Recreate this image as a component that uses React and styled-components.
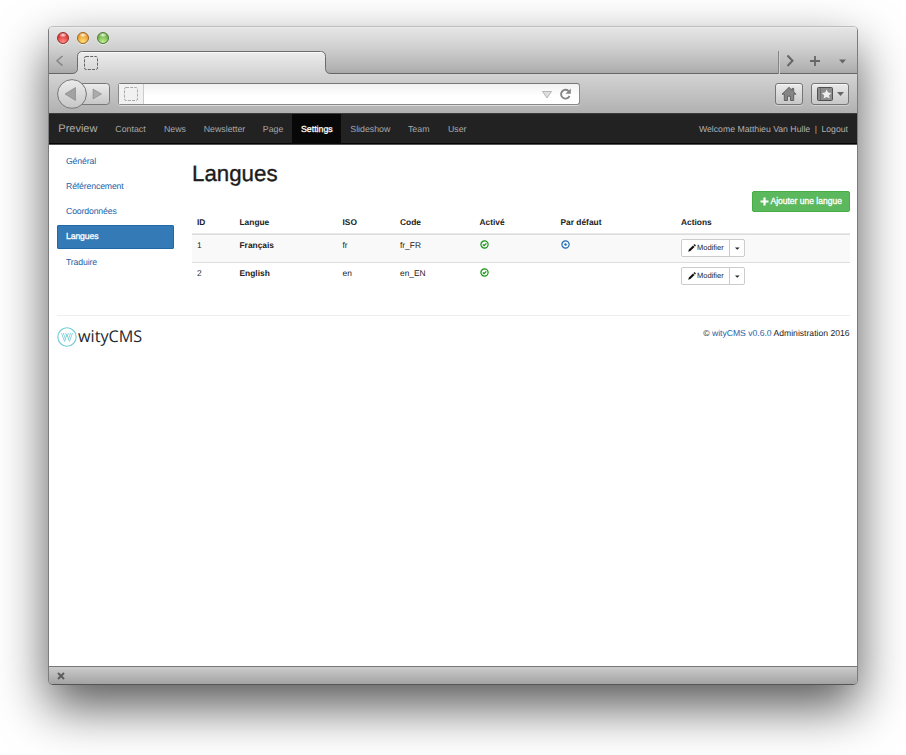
import React from "react";
import styled, { createGlobalStyle } from "styled-components";

const Global = createGlobalStyle`
  * { box-sizing: border-box; }
  html, body { margin: 0; background: #fff; }
  body {
    font-family: "Liberation Sans", Arial, sans-serif;
    font-size: 9px;
    line-height: 12px;
    color: #222;
    text-rendering: geometricPrecision;
    overflow: hidden;
  }
  a { color: #1b62a8; text-decoration: none; }
`;

const Desktop = styled.div`
  height: 755px;
  padding: 26px 48px 0;
  overflow: hidden;
`;

const Window = styled.div`
  display: flex;
  flex-direction: column;
  width: 810px;
  height: 659px;
  border: 1px solid #7c7c7c;
  border-top-color: #bdbdbd;
  border-bottom-color: #555;
  border-radius: 5px;
  background: #fff;
  background-clip: padding-box;
  box-shadow: 0 22px 50px rgba(0, 0, 0, 0.66);
`;

const TitleArea = styled.div`
  height: 47px;
  flex: none;
  border-bottom: 1px solid #666;
  border-radius: 4px 4px 0 0;
  background: linear-gradient(#e6e6e6, #d0d0d0 45%, #b3b3b3 90%, #a8a8a8);
  box-shadow: inset 0 1px #ececec;
`;

const Lights = styled.div`
  display: flex;
  gap: 8px;
  height: 24px;
  padding: 5px 0 0 8px;
`;

const Light = styled.i`
  width: 12px;
  height: 12px;
  border: 1px solid ${(p) => p.$edge};
  border-radius: 50%;
  background:
    radial-gradient(ellipse 4px 2.5px at 50% 20%, rgba(255,255,255,.9), rgba(255,255,255,0)),
    radial-gradient(circle at 50% 90%, ${(p) => p.$glow}, ${(p) => p.$tone} 70%);
  box-shadow: 0 1px rgba(255, 255, 255, 0.5);
`;

const TabStrip = styled.div`
  display: flex;
  height: 23px;
`;

const ScrollLeft = styled.div`
  width: 28px;
  padding: 4px 0 0 6px;
`;

const Tab = styled.div`
  position: relative;
  width: 249px;
  height: 24px;
  padding: 4px 0 0 6px;
`;

const TabShape = styled.svg`
  position: absolute;
  top: 0;
  left: -6px;
`;

const TabIcon = styled.div`
  position: relative;
`;

const TabTools = styled.div`
  display: flex;
  width: 79px;
  margin-left: auto;
  padding-top: 3px;
  border-left: 1px solid #858585;
  box-shadow: inset 1px 0 #cfcfcf;
`;

const Toolbar = styled.div`
  display: flex;
  flex: none;
  align-items: center;
  height: 39px;
  padding: 0 8px;
  background: linear-gradient(#d3d3d3, #b1b1b1);
`;

const History = styled.div`
  width: 54px;
  height: 32px;
`;

const AddressBar = styled.div`
  display: flex;
  align-items: center;
  width: 462px;
  height: 22px;
  margin: 1px 0 0 7px;
  border: 1px solid #8a8a8a;
  border-top-color: #777;
  border-radius: 3px;
  background: linear-gradient(#f1f1f1, #fff 60%);
  box-shadow: 0 1px rgba(255, 255, 255, 0.5);
`;

const Identity = styled.div`
  width: 25px;
  height: 20px;
  padding: 2px 0 0 4px;
  border-right: 1px solid #ccc;
  background: #f1f1f1;
`;

const AddressTools = styled.div`
  height: 20px;
  margin-left: auto;
  padding-right: 1px;
`;

const ToolButton = styled.div`
  width: ${(p) => p.$w}px;
  height: 22px;
  margin: 1px 0 0 ${(p) => p.$gap};
  border: 1px solid #757575;
  border-radius: 3px;
  background: linear-gradient(#eaeaea, #c8c8c8);
  box-shadow: inset 0 1px #f5f5f5, 0 1px rgba(255, 255, 255, 0.35);
`;

const Icon = styled.svg`
  display: block;
  flex: none;
`;

const Navbar = styled.nav`
  display: flex;
  flex: none;
  height: 32px;
  border-top: 1px solid #3c3c3c;
  border-bottom: 1px solid #555;
  background: #222;
  box-shadow: inset 0 -1px #050505;
  color: #9d9d9d;
  line-height: 30px;
  white-space: nowrap;
`;

const Brand = styled.div`
  width: 57.3px;
  padding-left: 9.3px;
  font-size: 11px;
  color: #b0b0b0;
`;

const NavItem = styled.div`
  width: ${(p) => p.$w}px;
  padding-left: 9px;
  font-size: 8.8px;
  color: ${(p) => (p.$active ? "#fff" : "#a8a8a8")};
  background: ${(p) => (p.$active ? "#080808" : "none")};
  -webkit-text-stroke: ${(p) => (p.$active ? "0.3px #fff" : "0")};
`;

const UserInfo = styled.div`
  display: flex;
  gap: 4.5px;
  margin-left: auto;
  padding-right: 9px;
  font-size: 8.7px;
  color: #b0b0b0;
`;

const Content = styled.main`
  display: flex;
  flex: none;
  height: 170px;
  padding: 0 7.5px 0 8px;
`;

const Sidebar = styled.aside`
  display: flex;
  flex-direction: column;
  gap: 1.3px;
  width: 117px;
  padding-top: 4.5px;
`;

const SideLink = styled.a`
  height: 24px;
  padding-left: 9px;
  border-radius: 2px;
  font-size: 8.7px;
  letter-spacing: -0.14px;
  line-height: 23.4px;
  ${(p) =>
    p.$active &&
    `color: #fff; background: #337ab7; box-shadow: inset 0 0 0 1px #1f69ab; -webkit-text-stroke: 0.3px #fff;`}
`;

const Panel = styled.section`
  display: flex;
  flex-direction: column;
  width: 657.5px;
  margin-left: 18px;
`;

const Title = styled.h1`
  height: 46px;
  margin: 0;
  padding-top: 14px;
  font-size: 22.3px;
  line-height: 30px;
  font-weight: 400;
  color: #1c1c1c;
  -webkit-text-stroke: 0.35px #1c1c1c;
`;

const AddButton = styled.button`
  display: flex;
  align-items: center;
  align-self: flex-end;
  gap: 2px;
  width: 97.5px;
  height: 20.5px;
  padding: 0 0 0 6.5px;
  border: 1px solid #45ae45;
  border-radius: 2px;
  background: #5cb85c;
  color: #fff;
  font: 8.5px "Liberation Sans", Arial, sans-serif;
  white-space: nowrap;
  -webkit-text-stroke: 0.3px #fff;
`;

const Row = styled.div`
  display: grid;
  grid-template-columns: 42.5px 103px 57.5px 79.5px 81px 120.5px 1fr;
  height: 28.3px;
  padding: 4.5px 0 0 5px;
  border-top: 1px solid #ddd;
  background: ${(p) => (p.$striped ? "#f9f9f9" : "#fff")};
  font-size: 8.4px;
  line-height: 13px;
`;

const HeadRow = styled(Row)`
  height: 22px;
  padding-top: 4.5px;
  border: 0;
  border-bottom: 1px solid #e8e8e8;
  line-height: 12px;
  font-weight: 700;
`;

const Strong = styled.b`
  font-weight: 700;
`;

const StatusIcon = styled(Icon)`
  margin-top: 1px;
`;

const ButtonGroup = styled.div`
  display: flex;
  width: 64px;
  height: 18px;
  border: 1px solid #ccc;
  border-radius: 2px;
  background: #fff;
  font-size: 7.5px;
  line-height: 16px;
`;

const EditPart = styled.div`
  display: flex;
  align-items: center;
  gap: 1.5px;
  width: 48px;
  padding-left: 5.5px;
  border-right: 1px solid #ccc;
`;

const Footer = styled.footer`
  display: flex;
  flex: 1;
  justify-content: space-between;
  margin: 0 7.5px 0 8px;
  border-top: 1px solid #eee;
`;

const Logo = styled.div`
  display: flex;
  align-items: center;
  gap: 1.5px;
  height: 22px;
  margin: 9.5px 0 0 -0.5px;
`;

const Wordmark = styled.span`
  margin-top: -2px;
  font: 400 16.2px/22px "Open Sans", "Noto Sans", sans-serif;
  color: #1d2a32;
`;

const Copyright = styled.div`
  margin-top: 10.5px;
  font-size: 8.6px;
`;

const StatusBar = styled.div`
  flex: none;
  height: 18px;
  padding: 5px 0 0 8px;
  border-top: 1px solid #777;
  border-radius: 0 0 4px 4px;
  background: linear-gradient(#cbcbcb, #a3a3a3);
`;

const DashedBox = ({ color }) => (
  <Icon width="16" height="16" viewBox="0 0 16 16">
    <rect x="1.5" y="1.5" width="13" height="13" rx="1.5" fill="none" stroke={color} strokeDasharray="3 1.2" />
  </Icon>
);

const CheckCircle = () => (
  <StatusIcon width="9" height="9" viewBox="0 0 9 9" fill="none" stroke="#149414">
    <circle cx="4.5" cy="4.5" r="3.6" strokeWidth="1.2" />
    <path d="M2.8 4.5 4.1 5.7 6.3 3.4" strokeWidth="1.3" />
  </StatusIcon>
);

const RecordCircle = () => (
  <StatusIcon width="9" height="9" viewBox="0 0 9 9" fill="none" stroke="#1d6cb0">
    <circle cx="4.5" cy="4.5" r="3.6" strokeWidth="1.2" />
    <circle cx="4.5" cy="4.5" r="1.2" fill="#1d6cb0" stroke="none" />
  </StatusIcon>
);

const EditButton = () => (
  <ButtonGroup>
    <EditPart>
      <Icon width="8" height="8" viewBox="0 0 8 8" fill="#111">
        <path d="M.2 7.8.9 5.6 5 1.5 6.5 3 2.4 7.1zM5.5 1 6.2.3Q6.6 0 7 .4L7.6 1Q8 1.4 7.7 1.8L7 2.5z" />
      </Icon>
      Modifier
    </EditPart>
    <Icon width="14" height="16" viewBox="0 0 14 16">
      <path d="M5 7.5h4.6L7.3 9.8z" fill="#222" />
    </Icon>
  </ButtonGroup>
);

const NAV = [
  ["Contact", 48.6], ["News", 39.8], ["Newsletter", 59.1], ["Page", 38.2],
  ["Settings", 49.3], ["Slideshow", 57.7], ["Team", 40], ["User", 36],
];
const SIDE = ["Général", "Référencement", "Coordonnées", "Langues", "Traduire"];
const LANGS = [
  { id: 1, name: "Français", iso: "fr", code: "fr_FR", main: true },
  { id: 2, name: "English", iso: "en", code: "en_EN", main: false },
];

export default function App() {
  return (
    <Desktop>
      <Global />
      <Window>
        <TitleArea>
          <Lights>
            <Light $edge="#93302d" $tone="#de3634" $glow="#ff8f88" />
            <Light $edge="#9a6420" $tone="#e99c2c" $glow="#ffe37c" />
            <Light $edge="#4e7a35" $tone="#6cb045" $glow="#c4f094" />
          </Lights>
          <TabStrip>
            <ScrollLeft>
              <Icon width="10" height="13" viewBox="0 0 10 13" fill="none" stroke="#868686" strokeWidth="1.5">
                <path d="M7.5 1 2 5.8 7.5 10.6" />
              </Icon>
            </ScrollLeft>
            <Tab>
              <TabShape width="261" height="24" viewBox="0 0 261 24">
                <defs>
                  <linearGradient id="tab" x2="0" y2="1">
                    <stop stopColor="#ededed" />
                    <stop offset="1" stopColor="#d3d3d3" />
                  </linearGradient>
                </defs>
                <path d="M1 24v-1.500Q6.500 22.500 6.500 17.500V5.500Q6.500.5 11.500.5H249.500Q254.500.5 254.500 5.500V17.500Q254.500 22.500 260 22.500V24z" fill="url(#tab)" />
                <path d="M1 22.500Q6.500 22.500 6.500 17.500V5.500Q6.500.5 11.500.5H249.500Q254.500.5 254.500 5.500V17.500Q254.500 22.500 260 22.500" fill="none" stroke="#6c6c6c" />
                <path d="M10 1.500H251" stroke="#f8f8f8" />
              </TabShape>
              <TabIcon><DashedBox color="#666" /></TabIcon>
            </Tab>
            <TabTools>
              <Icon width="76" height="16" viewBox="0 0 76 16" fill="none" stroke="#666">
                <path d="M8.500 1.500 13.500 6.800 8.500 12" strokeWidth="2" />
                <path d="M31 7H41M36 2v10" strokeWidth="1.800" />
                <path d="M60 5.500h7L63.500 9.500z" fill="#666" stroke="none" />
              </Icon>
            </TabTools>
          </TabStrip>
        </TitleArea>
        <Toolbar>
          <History>
            <Icon width="54" height="32" viewBox="0 0 54 32">
              <defs>
                <linearGradient id="key" x2="0" y2="1">
                  <stop stopColor="#ececec" />
                  <stop offset="1" stopColor="#c6c6c6" />
                </linearGradient>
              </defs>
              <rect x="15.5" y="5.5" width="37" height="21" rx="3" fill="url(#key)" stroke="#777" />
              <circle cx="15" cy="16" r="14.4" fill="url(#key)" stroke="#777" />
              <path d="M8 16 18.500 9.500v13z" fill="#a2a2a2" stroke="#808080" strokeWidth=".6" />
              <path d="M44.500 16 36 11v10z" fill="#aaa" stroke="#888" strokeWidth=".6" />
            </Icon>
          </History>
          <AddressBar>
            <Identity><DashedBox color="#aaa" /></Identity>
            <AddressTools>
              <Icon width="36" height="20" viewBox="0 0 36 20">
                <path d="M.5 7.500h9L5 14z" fill="#ddd" stroke="#aaa" strokeWidth=".8" />
                <path d="M26.500 7A4.400 4.400 0 1 0 27.500 12" fill="none" stroke="#858585" strokeWidth="1.900" />
                <path d="M28.800 4.500v5.300h-5.300z" fill="#858585" />
              </Icon>
            </AddressTools>
          </AddressBar>
          <ToolButton $w={28} $gap="auto">
            <Icon width="26" height="20" viewBox="0 0 26 20">
              <path d="M13 3.300 6 10.200h2.300V16.500h3.200v-4.300h3v4.300h3.200v-6.300H20L17.700 7.800V4.400h-1.600v1.900z" fill="#858585" stroke="#505050" strokeWidth=".8" />
            </Icon>
          </ToolButton>
          <ToolButton $w={38} $gap="8px">
            <Icon width="36" height="20" viewBox="0 0 36 20">
              <rect x="5.500" y="3.500" width="15" height="13" rx="1" fill="#8c8c8c" stroke="#505050" />
              <path d="M8.500 4v12" stroke="#6a6a6a" strokeWidth=".8" />
              <path d="m14.600 5.500 1.500 3.100 3.400.4-2.500 2.300.7 3.300-3.100-1.700-3 1.700.6-3.300L9.700 9l3.400-.4z" fill="#eee" />
              <path d="M25 8h7L28.500 12z" fill="#666" />
            </Icon>
          </ToolButton>
        </Toolbar>
        <Navbar>
          <Brand>Preview</Brand>
          {NAV.map(([label, w]) => (
            <NavItem key={label} $w={w} $active={label === "Settings"}>{label}</NavItem>
          ))}
          <UserInfo>
            <span>Welcome Matthieu Van Hulle</span><span>|</span><span>Logout</span>
          </UserInfo>
        </Navbar>
        <Content>
          <Sidebar>
            {SIDE.map((s) => <SideLink key={s} $active={s === "Langues"}>{s}</SideLink>)}
          </Sidebar>
          <Panel>
            <Title>Langues</Title>
            <AddButton>
              <Icon width="9" height="9" viewBox="0 0 9 9"><path d="M4.500.5v8M.5 4.500h8" stroke="#fff" strokeWidth="2.200" /></Icon>
              Ajouter une langue
            </AddButton>
            <HeadRow>
              <span>ID</span><span>Langue</span><span>ISO</span><span>Code</span>
              <span>Activé</span><span>Par défaut</span><span>Actions</span>
            </HeadRow>
            {LANGS.map((l) => (
              <Row key={l.id} $striped={l.main}>
                <span>{l.id}</span>
                <Strong>{l.name}</Strong>
                <span>{l.iso}</span>
                <span>{l.code}</span>
                <CheckCircle />
                {l.main ? <RecordCircle /> : <span />}
                <EditButton />
              </Row>
            ))}
          </Panel>
        </Content>
        <Footer>
          <Logo>
            <Icon width="20" height="20" viewBox="0 0 20 20" fill="none" stroke="#74cbd6">
              <circle cx="10" cy="10" r="9.200" strokeWidth="1.100" />
              <path d="M4.500 6 7.500 14.500 10 7.500 12.500 14.500 15.500 6M6.300 6l2.500 7M13.700 6l-2.500 7M8.500 6 10 9.500 11.500 6" strokeWidth=".8" />
            </Icon>
            <Wordmark>wityCMS</Wordmark>
          </Logo>
          <Copyright>© <a>wityCMS v0.6.0</a> Administration 2016</Copyright>
        </Footer>
        <StatusBar>
          <Icon width="8" height="8" viewBox="0 0 8 8"><path d="M1 1 7 7M7 1 1 7" stroke="#5c5c5c" strokeWidth="1.900" /></Icon>
        </StatusBar>
      </Window>
    </Desktop>
  );
}
